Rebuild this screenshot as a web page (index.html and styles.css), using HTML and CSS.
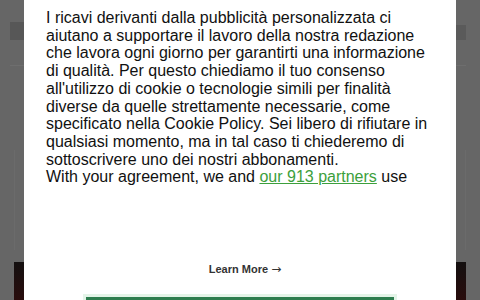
FILE: index.html
```html
<!DOCTYPE html>
<html>
<head>
    <title>Consenso cookie</title>
    <link rel="stylesheet" href="styles.css">
</head>
<body>
    <div class="page">
        <div class="masthead">
            <span class="logo"></span>
            <span class="tools"></span>
        </div>
        <div class="rule"></div>
        <div class="story"></div>
        <div class="photo"></div>
    </div>

    <div class="overlay">
        <div class="consent">
            <p class="consent-text">
                I ricavi derivanti dalla pubblicità personalizzata ci aiutano a supportare il lavoro della nostra redazione che lavora ogni giorno per garantirti una informazione di qualità. Per questo chiediamo il tuo consenso all'utilizzo di cookie o tecnologie simili per finalità diverse da quelle strettamente necessarie, come specificato nella Cookie Policy. Sei libero di rifiutare in qualsiasi momento, ma in tal caso ti chiederemo di sottoscrivere uno dei nostri abbonamenti.<br>
                With your agreement, we and <a href="#" class="partners">our 913 partners</a> use
            </p>
            <a href="#" class="learn-more">Learn More <span class="arrow">&rarr;</span></a>
            <button class="accept" aria-label="Accetta e continua"></button>
        </div>
    </div>
</body>
</html>
```

FILE: styles.css
```css
body {
    margin: 0;
    height: 300px;
    overflow: hidden;
    background-color: #666666;
    font-family: "Liberation Sans", Arial, sans-serif;
}

.page {
    padding: 22px 14px 0 10px;
}

.masthead {
    display: flex;
    justify-content: space-between;
    height: 18px;
}

.logo {
    width: 40px;
    background-color: #575757;
}

.tools {
    width: 20px;
    margin-top: 3px;
    background-color: #5a5a5a;
}

.rule {
    margin-top: 25px;
    height: 1px;
    background-color: #6e6e6e;
}

.story {
    margin: 84px 0 0 4px;
    height: 100px;
    border-left: 1px solid #6b6b6b;
    border-right: 1px solid #6b6b6b;
}

.photo {
    margin: 12px 0 0 4px;
    height: 40px;
    background: linear-gradient(180deg, #141010 0%, #2a0c0c 100%);
}

.overlay {
    position: fixed;
    top: 0;
    left: 0;
    right: 0;
    bottom: 0;
    display: flex;
    justify-content: center;
}

.consent {
    width: 388px;
    height: 340px;
    padding: 9px 22px 0;
    background-color: white;
    display: flex;
    flex-direction: column;
    align-items: center;
}

.consent-text {
    margin: 0;
    font-size: 16px;
    line-height: 17.7px;
    color: #111111;
    align-self: stretch;
}

.partners {
    color: #3ca03c;
}

.learn-more {
    margin: 76px 0 0 10px;
    font-size: 11px;
    line-height: 14px;
    font-weight: bold;
    color: #333333;
    text-decoration: none;
}

.arrow {
    font-family: "DejaVu Sans", sans-serif;
    font-weight: normal;
    font-size: 12px;
}

.accept {
    margin-top: 21px;
    width: 308px;
    height: 42px;
    border: none;
    background-color: #2e7d4f;
    box-shadow: 0 0 0 3px #e4f4e8;
}
```
